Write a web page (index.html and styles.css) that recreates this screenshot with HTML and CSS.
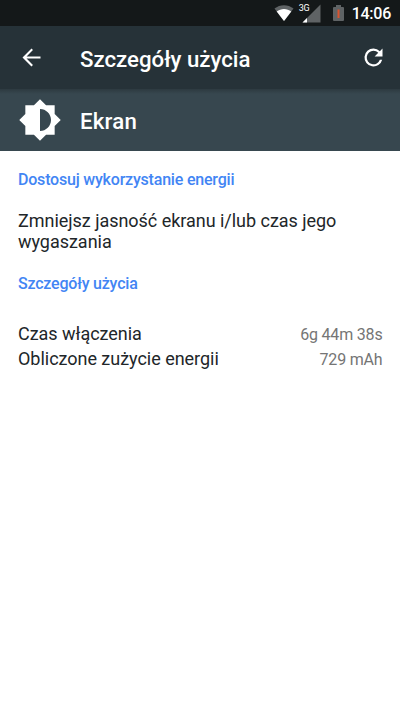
FILE: index.html
```html
<!DOCTYPE html>
<html lang="pl">
<head>
<meta charset="utf-8">
<title>Szczegóły użycia</title>
<link rel="stylesheet" href="styles.css">
</head>
<body>
<div class="status">
  <svg class="wifi" width="20" height="16" viewBox="0 0 20 16"><path fill="#5f6365" d="M.5 3.6C6-1 14-1 19.500 3.600L10 16z"/><path fill="#fff" d="M2.700 6.600C7 3 13 3 17.300 6.600L10 16z"/></svg>
  <div class="cell">
    <svg width="23" height="20" viewBox="0 0 23 20"><path fill="#5f6365" d="M22.500 1.500V19.500H4.500z"/><path fill="#fff" d="M9 15V19.500H4.500z"/></svg>
    <span class="net">3G</span>
  </div>
  <svg class="battery" width="11" height="16" viewBox="0 0 11 16"><path fill="#5f6365" d="M3 0h5v2h2q1 0 1 1v12q0 1-1 1H1q-1 0-1-1V3q0-1 1-1h2z"/><path fill="#d9532f" d="M4.500 4.500h2v8.500h-2z"/></svg>
  <span class="time">14:06</span>
</div>
<header class="bar">
  <svg class="icon" viewBox="0 0 24 24"><path d="M20 11.100H7.600l5.700-5.700L12 4l-8 8 8 8 1.300-1.400-5.700-5.700H20z"/></svg>
  <h1 class="title">Szczegóły użycia</h1>
  <svg class="icon refresh" viewBox="0 0 24 24"><path d="M17.650 6.350A7.960 7.960 0 0 0 12 4a8 8 0 1 0 7.730 10h-2.080A6 6 0 1 1 12 6c1.660 0 3.140.69 4.220 1.780L13 11h7V4z"/></svg>
</header>
<div class="item">
  <svg class="bright" viewBox="0 0 24 24"><path d="M20 15.310 23.310 12 20 8.690V4h-4.690L12 .69 8.690 4H4v4.690L.69 12 4 15.310V20h4.690L12 23.310 15.310 20H20zM12 18V6c3.310 0 6 2.690 6 6s-2.690 6-6 6z"/></svg>
  <h2 class="title">Ekran</h2>
</div>
<main class="content">
  <h3 class="section">Dostosuj wykorzystanie energii</h3>
  <p class="tip">Zmniejsz jasność ekranu i/lub czas jego wygaszania</p>
  <h3 class="section">Szczegóły użycia</h3>
  <div class="rows">
    <div class="row"><span>Czas włączenia</span><span class="value">6g 44m 38s</span></div>
    <div class="row"><span>Obliczone zużycie energii</span><span class="value">729 mAh</span></div>
  </div>
</main>
</body>
</html>
```
FILE: styles.css
```css
* { box-sizing: border-box; margin: 0; padding: 0; }
body { width: 400px; height: 711px; background: #fff; color: #212629; font-family: Roboto, sans-serif; overflow: hidden; }
svg { display: block; flex: none; }
.status { height: 26px; background: #141819; color: #fff; display: flex; align-items: flex-start; justify-content: flex-end; padding-right: 9px; }
.wifi { margin: 5px 4px 0 0; }
.cell { position: relative; margin: 3px 12px 0 0; }
.net { position: absolute; left: 1px; top: 0; font-size: 9px; line-height: 11px; letter-spacing: -0.3px; }
.battery { margin: 5px 8px 0 0; }
.time { font-size: 16px; line-height: 28px; font-weight: 500; letter-spacing: -0.25px; }
.bar { height: 63px; background: #263238; display: flex; align-items: center; padding: 0 13px 0 17.500px; }
.icon { width: 27px; height: 27px; fill: #fff; }
.title { font-size: 22.220px; line-height: 28px; font-weight: 500; color: #fff; }
.bar .title { margin-left: 35.500px; padding-top: 2px; }
.refresh { margin-left: auto; }
.item { height: 62px; background: linear-gradient(#2d3a40 0, #37474f 5px); display: flex; align-items: center; padding-left: 18px; }
.bright { width: 44px; height: 44px; fill: #fff; }
.item .title { margin-left: 18px; padding-top: 1px; letter-spacing: 0.2px; }
.content { padding: 19px 18px 0; }
.section { font-size: 16px; line-height: 20px; font-weight: 500; letter-spacing: -0.2px; color: #4285f4; }
.tip { font-size: 18px; line-height: 21px; letter-spacing: -0.03px; margin: 20px 0 22px; }
.rows { margin-top: 27px; }
.row { display: flex; justify-content: space-between; align-items: center; font-size: 18px; line-height: 25px; letter-spacing: -0.03px; }
.value { font-size: 16px; color: #757575; letter-spacing: -0.18px; padding-top: 2px; line-height: 23px; margin-right: -0.5px; position: relative; top: 0; }
```
